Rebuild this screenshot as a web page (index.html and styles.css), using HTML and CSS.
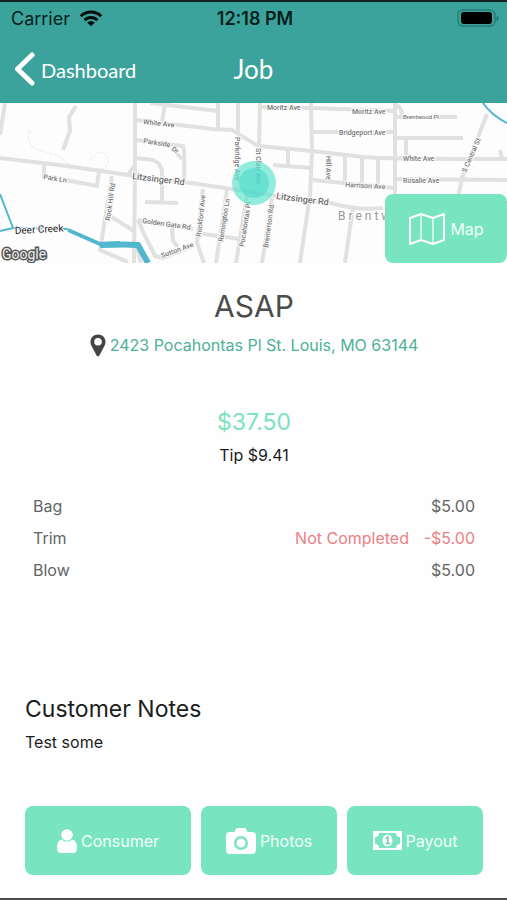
FILE: index.html
```html
<!DOCTYPE html>
<html lang="en">
<head>
<meta charset="utf-8">
<meta name="viewport" content="width=device-width, initial-scale=1">
<title>Job</title>
<link rel="stylesheet" href="styles.css">
</head>
<body>
<div class="screen">
  <header class="top">
    <div class="status">
      <div class="carrier">
        <span>Carrier</span>
        <svg width="24" height="17" viewBox="0 0 24 17" aria-hidden="true">
          <g fill="none" stroke="#020b0a" stroke-width="3">
            <path d="M1.8 6.2a14.5 14.5 0 0 1 20.4 0"/>
            <path d="M5.6 10.2a9 9 0 0 1 12.8 0"/>
          </g>
          <path d="M12 16.2 8.2 12.6a5.4 5.4 0 0 1 7.6 0z" fill="#020b0a"/>
        </svg>
      </div>
      <time class="clock">12:18 PM</time>
      <svg class="battery" width="42" height="19" viewBox="0 0 42 19" aria-hidden="true">
        <rect x="1" y="1" width="37" height="16" rx="5" fill="none" stroke="#2c857c" stroke-width="2"/>
        <rect x="4" y="3" width="31" height="12" rx="3" fill="#000"/>
        <path d="M39.500 6.500q2 1 2 3t-2 3z" fill="#23766d"/>
      </svg>
    </div>
    <nav class="nav">
      <a class="back" href="#">
        <svg width="21" height="34" viewBox="0 0 21 34" aria-hidden="true"><path d="M18 3 3.5 17 18 31" fill="none" stroke="#fff" stroke-width="5" stroke-linecap="round" stroke-linejoin="round"/></svg>
        <span>Dashboard</span>
      </a>
      <h1 class="title">Job</h1>
    </nav>
  </header>

  <section class="map" aria-label="Job location">
    <svg class="map-art" viewBox="0 0 507 160" preserveAspectRatio="xMidYMid slice">
      <g class="road thin">
        <path d="M30 28q-4 8 3 17l22 7q10 3 14 10M90 56q6-3 8-6t8 2l3 6-4 7-8 1" stroke-dasharray="3 2" stroke-width="1"/>
      </g>
      <g class="road">
        <path d="M5 0 0 32M76 3 69 14l1 14-7 19"/>
        <path d="M0 55l67 8 61 9 70 9 79 12 53 7q30 8 53 5"/>
        <path d="M44 62v11l53 10 2-15"/>
        <path d="M135 0v70l-1 90M128 72l6-9"/>
        <path d="M112 73l-12 74 28 12M110 113l24 15"/>
        <path d="M135 55l18 2q8 3 9 11v31M145 99l33 1"/>
        <path d="M137 17l76 9 19 1 26 16 54 5 51 6q20 2 144 2"/>
        <path d="M137 37l46 6q2 3 1 36M172 45l10 11"/>
        <path d="M150 0l68 8M165 2l-3 16M218 0v27M238 0v30M260 0l-1 42"/>
        <path d="M261 4l50 1 86 3M311 0l1 50-2 42-10 68"/>
        <path d="M395 0v92M397 2q6 5 5 12M397 14h60M313 29h82M395 35h68M406 35v20"/>
        <path d="M313 77l82 8M329 53v26M345 53v27M362 54v27M378 56v27"/>
        <path d="M395 76l112 1M487 11l-25 64-4 20M500 47l2 9"/>
        <path d="M273 62l39 3M288 47v15M353 104l-8 56"/>
        <path d="M203 86l-6 54 7 20M227 87l-11 73M247 92l-11 68M272 95l-10 65"/>
        <path d="M197 130l43 6M138 117l55 9M138 117l7 16 10 20 8 2 28-11M172 125l1 13 5 6M137 145l4 15"/>
      </g>
      <g class="water">
        <path d="M0 91l13 34-13 3M13 125l55 1" stroke-width="2"/>
        <path d="M68 127l32 14 20-1" stroke-width="4"/>
        <path d="M100 142q26-1 38 0l10 18" stroke-width="6"/>
        <path d="M483 0q8 12 24 20" stroke-width="2"/>
      </g>
      <g class="label">
        <text transform="translate(143 21) rotate(6)">White Ave</text>
        <text transform="translate(143 40) rotate(9)">Parkside</text>
        <text transform="translate(171 47) rotate(35)">Dr</text>
        <text transform="translate(43 76) rotate(9)">Park Ln</text>
        <text transform="translate(110 118) rotate(-82)">Rock Hill Rd</text>
        <text transform="translate(142 120) rotate(8)">Golden Gate Rd</text>
        <text transform="translate(162 155) rotate(-20)">Sutton Ave</text>
        <text transform="translate(201 134) rotate(-84)">Rockford Ave</text>
        <text transform="translate(223 139) rotate(-81)">Remington Ln</text>
        <text transform="translate(244 144) rotate(-81)">Pocahontas Pl</text>
        <text transform="translate(268 145) rotate(-82)">Bremerton Rd</text>
        <text transform="translate(235 34) rotate(90)">Parkridge Ave</text>
        <text transform="translate(256 45) rotate(90)">St Clair Ave</text>
        <text x="267" y="7">Moritz Ave</text>
        <text x="352" y="11">Moritz Ave</text>
        <text x="403" y="16" class="small">Brentwood Pl</text>
        <text x="339" y="32">Bridgeport Ave</text>
        <text x="403" y="58">White Ave</text>
        <text x="403" y="80">Rosalie Ave</text>
        <text transform="translate(345 84) rotate(3)">Harrison Ave</text>
        <text transform="translate(326 53) rotate(90)">Hill Ave</text>
        <text transform="translate(466 70) rotate(-66)">S Central St</text>
        <text transform="translate(132 76) rotate(7)" class="major">Litzsinger Rd</text>
        <text transform="translate(276 96) rotate(7)" class="major">Litzsinger Rd</text>
        <text transform="translate(15 131) rotate(-3)" class="creek">Deer Creek</text>
        <text x="338" y="117" class="town">Brentwood</text>
      </g>
      <text x="2" y="156" class="brand">Google</text>
      <circle cx="254" cy="80" r="22" fill="#5fe3cf" fill-opacity=".68"/>
      <circle cx="254" cy="80" r="15" fill="#3fd6c6" fill-opacity=".5"/>
    </svg>
    <button class="action map-button" type="button">
      <svg width="38" height="34" viewBox="0 0 38 34" aria-hidden="true">
        <path d="M2 6 13 2l12 4 11-4v26l-11 4-12-4-11 4z" fill="none" stroke="#fff" stroke-width="2" stroke-linejoin="round"/>
        <path d="M13 2v26M25 6v26" fill="none" stroke="#e6fbf4" stroke-width="1.500"/>
      </svg>
      <span>Map</span>
    </button>
  </section>

  <main class="content">
    <section class="summary">
      <h2 class="when">ASAP</h2>
      <a class="address" href="#">
        <svg width="16" height="23" viewBox="0 0 16 23" aria-hidden="true"><path fill-rule="evenodd" d="M8 .5C3.700.5.5 3.700.5 7.700c0 1.800.5 3 1.200 4.500L6.600 21.500q1.400 1.700 2.800 0l4.900-9.300c.7-1.500 1.200-2.700 1.200-4.500C15.500 3.700 12.300.5 8 .5zM8 4a3.800 3.800 0 1 1 0 7.600A3.800 3.800 0 0 1 8 4z" fill="#434645"/></svg>
        <span>2423 Pocahontas Pl St. Louis, MO 63144</span>
      </a>
      <p class="price">$37.50</p>
      <p class="tip">Tip $9.41</p>
    </section>

    <table class="services">
      <tbody>
        <tr><th scope="row">Bag</th><td class="state"></td><td class="amount">$5.00</td></tr>
        <tr class="missed"><th scope="row">Trim</th><td class="state">Not Completed</td><td class="amount">-$5.00</td></tr>
        <tr><th scope="row">Blow</th><td class="state"></td><td class="amount">$5.00</td></tr>
      </tbody>
    </table>

    <section class="notes">
      <h2>Customer Notes</h2>
      <p>Test some</p>
    </section>

    <div class="actions">
      <button class="action" type="button">
        <svg width="20" height="24" viewBox="0 0 20 24" aria-hidden="true"><g fill="#fff"><circle cx="10" cy="6" r="5.800"/><path d="M4.500 10.500q5.500 4.500 11 0Q20 11.500 20 19q0 5-4 5H4q-4 0-4-5 0-7.500 4.500-8.500z"/></g></svg>
        <span>Consumer</span>
      </button>
      <button class="action" type="button">
        <svg width="30" height="26" viewBox="0 0 30 26" aria-hidden="true"><path fill-rule="evenodd" fill="#fff" d="M4 4h4.500l1.200-2.700Q10.300 0 12 0h6q1.700 0 2.300 1.300L21.500 4H26q4 0 4 4v14q0 4-4 4H4q-4 0-4-4V8q0-4 4-4zm11 4a7 7 0 1 0 0 14 7 7 0 0 0 0-14zm0 2.500a4.500 4.500 0 1 1 0 9 4.500 4.500 0 0 1 0-9z"/></svg>
        <span>Photos</span>
      </button>
      <button class="action" type="button">
        <svg width="29" height="19" viewBox="0 0 29 19" aria-hidden="true"><path fill-rule="evenodd" fill="#fff" d="M0 0h29v19H0zM6 2q0 4-4 4v7q4 0 4 4h17q0-4 4-4V6q-4 0-4-4z"/><ellipse cx="14.500" cy="9.500" rx="5" ry="6" fill="#fff"/><path d="m12.800 7.500 2-1.500v6.500M12.500 12.500h4.500" fill="none" stroke="#65cdac" stroke-width="1.500"/></svg>
        <span>Payout</span>
      </button>
    </div>
  </main>
</div>
</body>
</html>
```
FILE: styles.css
```css
* { box-sizing: border-box; }

body {
  margin: 0;
  background: #fefefe;
  color: #1c1d1d;
  font-family: Inter, "Liberation Sans", sans-serif;
  font-size: 16px;
}

h1, h2, p { margin: 0; font-weight: 400; }
a { text-decoration: none; }
svg { display: block; flex: none; }

.screen {
  min-height: 100vh;
  border-top: 2px solid #14211f;
  border-bottom: 2px solid #4b4b4b;
}

.top { background: #3ba39b; color: #fff; }

.status {
  display: grid;
  grid-template-columns: 1fr auto 1fr;
  align-items: center;
  height: 32px;
  padding: 0 8px 0 11px;
  color: #06201d;
  font-size: 18px;
}
.carrier { display: flex; align-items: center; gap: 9px; }
.clock { font-weight: 600; }
.battery { justify-self: end; }

.nav {
  display: grid;
  grid-template-columns: 1fr auto 1fr;
  align-items: center;
  height: 69px;
  padding: 0 14px;
  font-family: Lato, "Liberation Sans", sans-serif;
}
.back { display: flex; align-items: center; gap: 6px; color: #fff; font-size: 20px; }
.back span { padding-top: 2px; }
.title { font-size: 26px; line-height: 32px; }

.map { position: relative; height: 160px; }
.map-art { width: 100%; height: 100%; background: #fdfdfd; }
.road { fill: none; stroke: #e2e1e2; stroke-width: 4; }
.thin { stroke: #e6e6e6; }
.water { fill: none; stroke: #51b7cd; }
.label {
  fill: #777;
  stroke: #fdfdfd;
  stroke-width: 2px;
  paint-order: stroke;
  font-family: Roboto, "Liberation Sans", sans-serif;
  font-size: 7px;
  font-weight: 500;
}
.label .small { font-size: 6px; }
.label .major { font-size: 9px; fill: #6c6c6c; }
.label .creek { font-size: 10px; font-weight: 400; fill: #222; }
.label .town { font-size: 12px; font-weight: 400; fill: #999; letter-spacing: 3px; }
.brand {
  fill: #eee;
  stroke: #555;
  stroke-width: 3px;
  paint-order: stroke;
  font-family: Roboto, "Liberation Sans", sans-serif;
  font-size: 14px;
}

.action {
  display: flex;
  align-items: center;
  justify-content: center;
  gap: 4px;
  height: 69px;
  padding: 0;
  border: 0;
  border-radius: 8px;
  background: #79e4c0;
  color: #f1fffa;
  font-family: inherit;
  font-size: 16px;
}
.map-button { position: absolute; right: 0; bottom: 0; width: 122px; }

.content { padding: 0 24px 22px 25px; }

.summary { display: flex; flex-direction: column; align-items: center; padding-top: 24px; }
.when { color: #4b4d4c; font-size: 30px; line-height: 38px; }
.address {
  display: flex;
  align-items: center;
  gap: 4px;
  margin-top: 8px;
  color: #4fb098;
  line-height: 24px;
}
.price { margin-top: 49px; color: #7be2c0; font-size: 23px; line-height: 32px; }
.tip { margin-top: 5px; line-height: 24px; }

.services {
  width: 100%;
  margin-top: 23px;
  border-collapse: collapse;
  color: #626564;
  line-height: 32px;
}
.services th, .services td { padding: 0; font-weight: 400; text-align: left; }
.services th { padding-left: 8px; }
.services .state { text-align: right; }
.services .amount { width: 74px; padding-right: 8px; text-align: right; }
.services .missed td { color: #ea8084; }

.notes { margin-top: 107px; }
.notes h2 { font-size: 23px; line-height: 32px; }
.notes p { margin-top: 5px; line-height: 24px; }

.actions {
  display: grid;
  grid-template-columns: 11fr 9fr 9fr;
  gap: 10px;
  margin-top: 52px;
}
```
